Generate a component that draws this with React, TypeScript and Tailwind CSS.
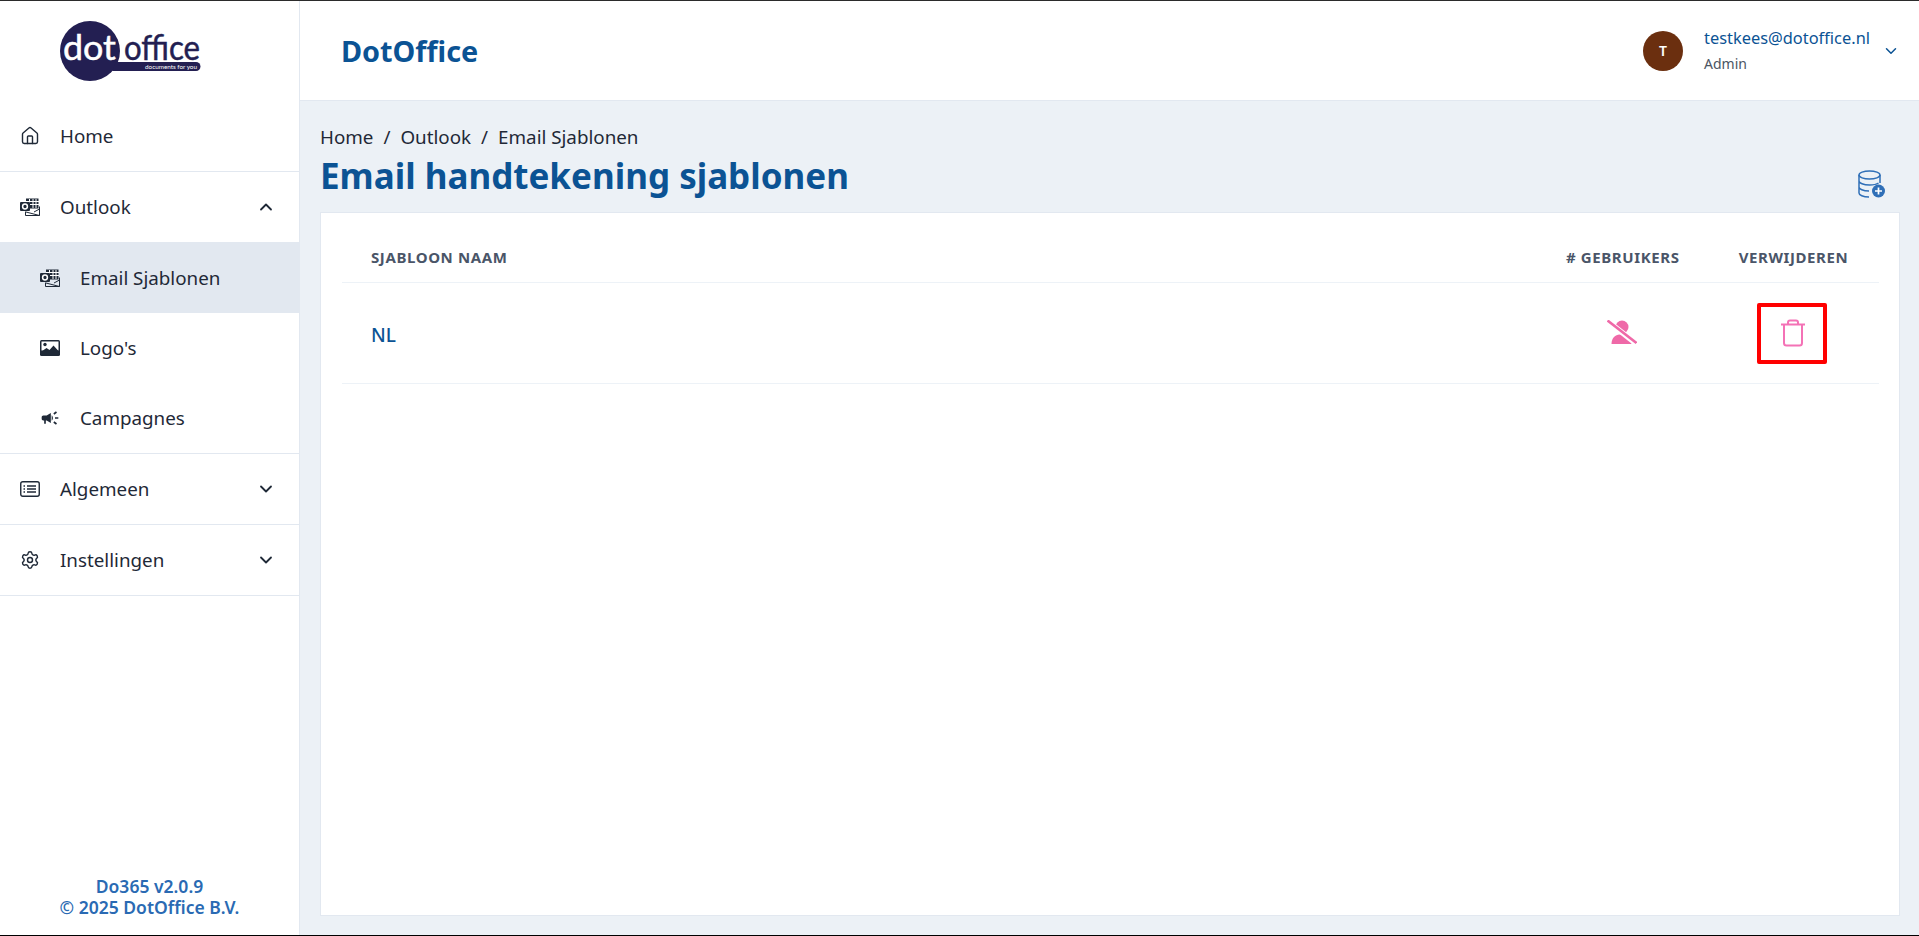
import { ChevronDown, ChevronUp, Home, Settings } from 'lucide-react'
import type { ReactNode } from 'react'
import { MdCampaign } from 'react-icons/md'

function OutlookIcon() {
  return (
    <svg width="20" height="18" viewBox="0 0 20 18" className="text-[#1f2937]">
      <rect x="6" y="0.5" width="12.5" height="10" fill="currentColor" />
      <path d="M9.5 1v9M13 1v9M16 1v9M6 3.5h13M6 6.5h13" stroke="#fff" strokeWidth="1" />
      <rect x="0" y="4" width="10" height="9" rx="1" fill="currentColor" />
      <circle cx="5" cy="8.5" r="2.4" fill="none" stroke="#fff" strokeWidth="1.5" />
      <path d="M5.5 13.5V17.5H19.5V8.5M6 14l13.5 3.5M19.5 11l-5.5 3" fill="none" stroke="currentColor" strokeWidth="1" />
    </svg>
  )
}

function ImageIcon() {
  return (
    <svg width="20" height="16" viewBox="0 0 20 16" className="text-[#1f2937]">
      <rect x="0" y="0" width="20" height="16" rx="1.5" fill="currentColor" />
      <rect x="1.5" y="1.5" width="17" height="9" fill="#fff" />
      <circle cx="5" cy="4.5" r="1.7" fill="currentColor" />
      <path d="M1.5 11.5l5-3.5 3 2 4-4.5 5 5.5v2h-17z" fill="currentColor" />
    </svg>
  )
}

function ListIcon() {
  return (
    <svg width="20" height="16" viewBox="0 0 20 16" fill="none" stroke="#1f2937" className="shrink-0">
      <rect x="0.75" y="0.75" width="18.5" height="14.5" rx="2" strokeWidth="1.4" />
      <path d="M7 5h9M7 8h9M7 11h9M3.5 5h1.5M3.5 8h1.5M3.5 11h1.5" strokeWidth="1.5" />
    </svg>
  )
}

function TrashIcon() {
  return (
    <svg width="26" height="28" viewBox="0 0 26 28" fill="none" stroke="#f472b6" strokeWidth="2">
      <path d="M1 5.5h24M4 5.5v18.5a2.5 2.5 0 0 0 2.5 2.5h13a2.5 2.5 0 0 0 2.5-2.5V5.5M8 5.5V3.5a2 2 0 0 1 2-2h6a2 2 0 0 1 2 2v2" />
    </svg>
  )
}

function UserOffIcon() {
  return (
    <svg width="30" height="24" viewBox="0 0 30 24">
      <circle cx="15" cy="7" r="6.5" fill="#ef69a8" />
      <path d="M4.5 24c0-6 4-9.5 8-9.5h5c4 0 7 4 7 9.5z" fill="#ef69a8" />
      <path d="M1 1.5l28 22" stroke="#fff" strokeWidth="5.5" />
      <path d="M0.5 0.5l29 22.5" stroke="#ef69a8" strokeWidth="2.6" />
    </svg>
  )
}

function DatabaseAddIcon() {
  return (
    <svg width="27" height="28" viewBox="0 0 27 28" fill="none" stroke="#2f6fb7" strokeWidth="1.5">
      <ellipse cx="11.5" cy="5" rx="10.5" ry="4" />
      <path d="M1 5v18c0 2 4 4 10 4M22 5v8M1 11c0 2 4.5 4 10.5 4 3 0 7-.6 9-2M1 17c0 2 4 4 10 4" />
      <circle cx="20.5" cy="21" r="6.5" fill="#2f6fb7" stroke="none" />
      <path d="M20.5 17.5v7M17 21h7" stroke="#fff" strokeWidth="1.7" />
    </svg>
  )
}

function Logo() {
  return (
    <svg width="150" height="62" viewBox="0 0 150 62" className="text-[#231f52]">
      <circle cx="30" cy="31" r="30" fill="currentColor" />
      <path d="M56 42h80a4.5 4.5 0 0 1 0 9H52z" fill="currentColor" />
      <text x="3" y="40" fill="#fff" stroke="#fff" strokeWidth="0.5" fontFamily="Lato" fontSize="35" textLength="53" lengthAdjust="spacingAndGlyphs">dot</text>
      <text x="64" y="39.5" fill="currentColor" stroke="currentColor" strokeWidth="0.5" fontFamily="Lato" fontSize="35" textLength="76" lengthAdjust="spacingAndGlyphs">office</text>
      <text x="85" y="48.8" fill="#fff" fontFamily="Lato" fontSize="6.4" textLength="52" lengthAdjust="spacingAndGlyphs">documents for you</text>
    </svg>
  )
}

function NavRow({ icon, label, chevron }: { icon: ReactNode; label: string; chevron?: 'up' | 'down' }) {
  return (
    <div className="flex h-[71px] items-center border-b border-[#e2e8f0] pl-5 pr-[23px] shrink-0">
      <div className="flex w-[40px] items-center">{icon}</div>
      <span className="text-[18.8px] text-[#1f2937]">{label}</span>
      {chevron === 'up' && <ChevronUp size={20} strokeWidth={2.2} className="ml-auto text-[#1f2937]" />}
      {chevron === 'down' && <ChevronDown size={20} strokeWidth={2.2} className="ml-auto text-[#1f2937]" />}
    </div>
  )
}

function SubRow({ icon, label, active }: { icon: ReactNode; label: string; active?: boolean }) {
  return (
    <div className={`flex h-[70px] items-center pl-10 ${active ? 'bg-[#e2e8f0]' : ''}`}>
      <div className="flex w-[40px] items-center">{icon}</div>
      <span className="text-[18.8px] text-[#1f2937]">{label}</span>
    </div>
  )
}

export default function App() {
  return (
    <div className="flex h-[936px] flex-col overflow-hidden bg-[#ecf1f6] font-['Noto_Sans',sans-serif] border-t border-b border-t-[#2b2b2b] border-b-black">
      <div className="flex min-h-0 flex-1">
        <aside className="flex w-[300px] shrink-0 flex-col border-r border-[#e2e8f0] bg-white">
          <div className="flex h-[100px] shrink-0 items-start pl-[60px] pt-[19px]">
            <Logo />
          </div>
          <NavRow icon={<Home size={20} strokeWidth={1.7} className="text-[#1f2937]" />} label="Home" />
          <NavRow icon={<OutlookIcon />} label="Outlook" chevron="up" />
          <div className="flex flex-col border-b border-[#e2e8f0]">
            <SubRow icon={<OutlookIcon />} label="Email Sjablonen" active />
            <SubRow icon={<ImageIcon />} label="Logo's" />
            <SubRow icon={<MdCampaign size={20} className="text-[#1f2937]" />} label="Campagnes" />
          </div>
          <NavRow icon={<ListIcon />} label="Algemeen" chevron="down" />
          <NavRow icon={<Settings size={20} strokeWidth={1.7} className="text-[#1f2937]" />} label="Instellingen" chevron="down" />
          <div className="mt-auto pb-[17px] text-center text-[17.5px] leading-[21px] font-semibold text-[#2a6ab3]">
            <div>Do365 v2.0.9</div>
            <div>© 2025 DotOffice B.V.</div>
          </div>
        </aside>

        <main className="flex min-w-0 flex-1 flex-col">
          <header className="flex h-[100px] shrink-0 items-center border-b border-[#e2e8f0] bg-white pl-[41px] pr-[19px]">
            <span className="text-[28.8px] font-bold text-[#0b5394]">DotOffice</span>
            <div className="ml-auto flex items-center">
              <div className="flex size-10 items-center justify-center rounded-full bg-[#6b2f0f] text-[14px] font-semibold text-white">T</div>
              <div className="ml-[21px] flex flex-col">
                <span className="text-[16.4px] leading-[24px] text-[#0b5394]">testkees@dotoffice.nl</span>
                <span className="mt-[2px] text-[14px] leading-[24px] text-[#4b5563]">Admin</span>
              </div>
              <ChevronDown size={18} className="ml-3 text-[#0b5394]" />
            </div>
          </header>

          <div className="flex min-h-0 flex-1 flex-col pl-5 pr-[19px] pt-[23px] pb-[19px]">
            <div className="flex items-end justify-between">
              <div>
                <div className="flex gap-[10px] text-[18.8px] leading-[26px] text-[#1f2937]">
                  <span>Home</span><span>/</span><span>Outlook</span><span>/</span><span>Email Sjablonen</span>
                </div>
                <h1 className="pt-px text-[35px] leading-[50px] font-bold text-[#0b5394]">Email handtekening sjablonen</h1>
              </div>
              <div className="mb-[3px] mr-[15px]"><DatabaseAddIcon /></div>
            </div>

            <div className="mt-[11px] flex-1 border border-[#e2e8f0] bg-white pl-[21px] pr-5 pt-[16px]">
              <div className="flex h-[54px] items-center border-b border-[#edf2f7] pl-[29px] pt-[4px] text-[15px] font-bold tracking-[0.6px] text-[#4a5568]">
                <span>SJABLOON NAAM</span>
                <span className="ml-auto w-[111px] text-center whitespace-nowrap">#&nbsp;GEBRUIKERS</span>
                <span className="ml-[61px] mr-[30px] w-[111px] text-center whitespace-nowrap">VERWIJDEREN</span>
              </div>
              <div className="flex h-[101px] items-center border-b border-[#edf2f7] pl-[29px]">
                <span className="pt-[4px] text-[19px] font-medium text-[#0b5394]">NL</span>
                <div className="ml-auto flex w-[111px] justify-center pb-[3px]"><UserOffIcon /></div>
                <div className="ml-[61px] mr-[30px] flex w-[111px] justify-center pr-[3px]">
                  <div className="flex h-[61px] w-[70px] items-center justify-center rounded-[2px] border-4 border-[#ff0000] pl-[2px]">
                    <TrashIcon />
                  </div>
                </div>
              </div>
            </div>
          </div>
        </main>
      </div>
    </div>
  )
}
